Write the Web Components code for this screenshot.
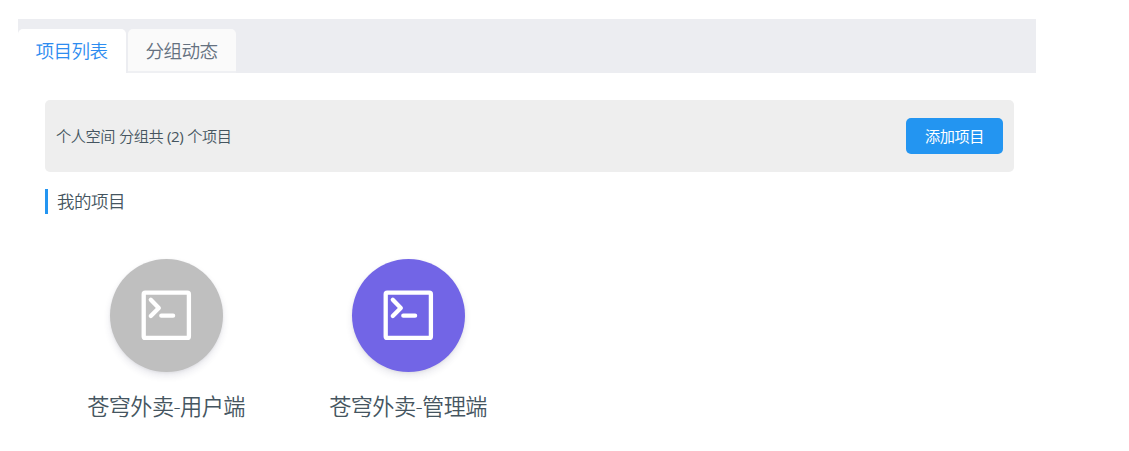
<!DOCTYPE html>
<html lang="zh-CN">
<head>
<meta charset="utf-8">
<title>项目列表</title>
<style>
  body {
    margin: 0;
    background: #fff;
    color: #455560;
    font-family: "Open Sans", "Noto Sans CJK SC", sans-serif;
    font-weight: 350;
  }
</style>
</head>
<body>
<group-page></group-page>

<script>
class TabItem extends HTMLElement {
  constructor() {
    super();
    this.attachShadow({ mode: "open" });
  }

  connectedCallback() {
    this.shadowRoot.innerHTML = `
      <style>
        :host{
          box-sizing: border-box;
          width: 108px;
          height: 44px;
          padding-right: 1px;
          line-height: 43px;
          text-align: center;
          font-size: 18.6px;
          letter-spacing: -.6px;
          color: #657180;
          background: #fafafa;
          border-bottom: 2px solid #eff0f3;
          border-radius: 5px 5px 0 0;
        }
        :host([active]){
          color: #2d8cf0;
          background: #fff;
          border-bottom: 0;
        }
      </style>
      <slot></slot>
    `;
  }
}

class TabBar extends HTMLElement {
  constructor() {
    super();
    this.attachShadow({ mode: "open" });
  }

  connectedCallback() {
    this.shadowRoot.innerHTML = `
      <style>
        :host{
          box-sizing: border-box;
          display: flex;
          gap: 2px;
          height: 54px;
          padding-top: 10px;
          background: #ecedf1;
        }
      </style>
      <slot></slot>
    `;
  }
}

class GroupSummary extends HTMLElement {
  constructor() {
    super();
    this.attachShadow({ mode: "open" });
  }

  connectedCallback() {
    this.shadowRoot.innerHTML = `
      <style>
        :host{
          box-sizing: border-box;
          display: flex;
          align-items: center;
          justify-content: space-between;
          height: 72px;
          padding: 0 11px;
          font-size: 15.2px;
          letter-spacing: -.44px;
          background: #eee;
          border-radius: 5px;
        }
        p{
          margin: 0;
          padding-bottom: 2px;
          word-spacing: .4px;
        }
        ::slotted(span){
          font-weight: 400;
        }
        button{
          width: 97px;
          height: 36px;
          padding: 0 0 2px;
          border: 0;
          border-radius: 5px;
          font: inherit;
          font-weight: 400;
          letter-spacing: inherit;
          color: #fff;
          background: #2395f1;
        }
      </style>
      <p><slot></slot></p>
      <button>添加项目</button>
    `;
  }
}

class SectionTitle extends HTMLElement {
  constructor() {
    super();
    this.attachShadow({ mode: "open" });
  }

  connectedCallback() {
    this.shadowRoot.innerHTML = `
      <style>
        :host{
          display: block;
          height: 25px;
          line-height: 25px;
          padding-left: 9px;
          border-left: 3px solid #2395f1;
          font-size: 17.5px;
          letter-spacing: -.5px;
        }
      </style>
      <slot></slot>
    `;
  }
}

class ProjectCard extends HTMLElement {
  constructor() {
    super();
    this.attachShadow({ mode: "open" });
  }

  connectedCallback() {
    this.shadowRoot.innerHTML = `
      <style>
        :host{
          display: flex;
          flex-direction: column;
          align-items: center;
          width: 242px;
        }
        .logo{
          display: flex;
          align-items: center;
          justify-content: center;
          width: 113px;
          height: 113px;
          border-radius: 50%;
          background: var(--logo-color, #bfbfbf);
          box-shadow: 0 4px 7px rgba(50, 50, 93, .11), 0 1px 3px rgba(0, 0, 0, .06);
        }
        svg{
          fill: none;
          stroke: #fff;
          stroke-width: 4.3;
          stroke-linecap: round;
          stroke-linejoin: round;
        }
        .name{
          margin-top: 19px;
          height: 32px;
          line-height: 32px;
          font-size: 22.2px;
          letter-spacing: -.6px;
          white-space: nowrap;
        }
      </style>
      <div class="logo">
        <svg width="51" height="51" viewBox="0 0 51 51">
          <rect x="2.7" y="2.7" width="45.2" height="45.2" rx="1.5"/>
          <path d="M9.8 9.8l8 8.1-8 8.1M20.3 25.7h11.8"/>
        </svg>
      </div>
      <div class="name"><slot></slot></div>
    `;
  }
}

class GroupPage extends HTMLElement {
  constructor() {
    super();
    this.attachShadow({ mode: "open" });
  }

  connectedCallback() {
    this.shadowRoot.innerHTML = `
      <style>
        :host{
          display: block;
          width: 1018px;
          padding: 19px 0 0 18px;
        }
        .content{
          padding: 27px 22px 0 27px;
        }
        section-title{
          margin-top: 17px;
        }
        .projects{
          display: flex;
          margin-top: 45px;
        }
        .admin{
          --logo-color: #7265e6;
        }
      </style>
      <tab-bar>
        <tab-item active>项目列表</tab-item>
        <tab-item>分组动态</tab-item>
      </tab-bar>
      <div class="content">
        <group-summary>个人空间 分组共 <span>(2)</span> 个项目</group-summary>
        <section-title>我的项目</section-title>
        <div class="projects">
          <project-card>苍穹外卖-用户端</project-card>
          <project-card class="admin">苍穹外卖-管理端</project-card>
        </div>
      </div>
    `;
  }
}

customElements.define("tab-item", TabItem);
customElements.define("tab-bar", TabBar);
customElements.define("group-summary", GroupSummary);
customElements.define("section-title", SectionTitle);
customElements.define("project-card", ProjectCard);
customElements.define("group-page", GroupPage);
</script>
</body>
</html>
